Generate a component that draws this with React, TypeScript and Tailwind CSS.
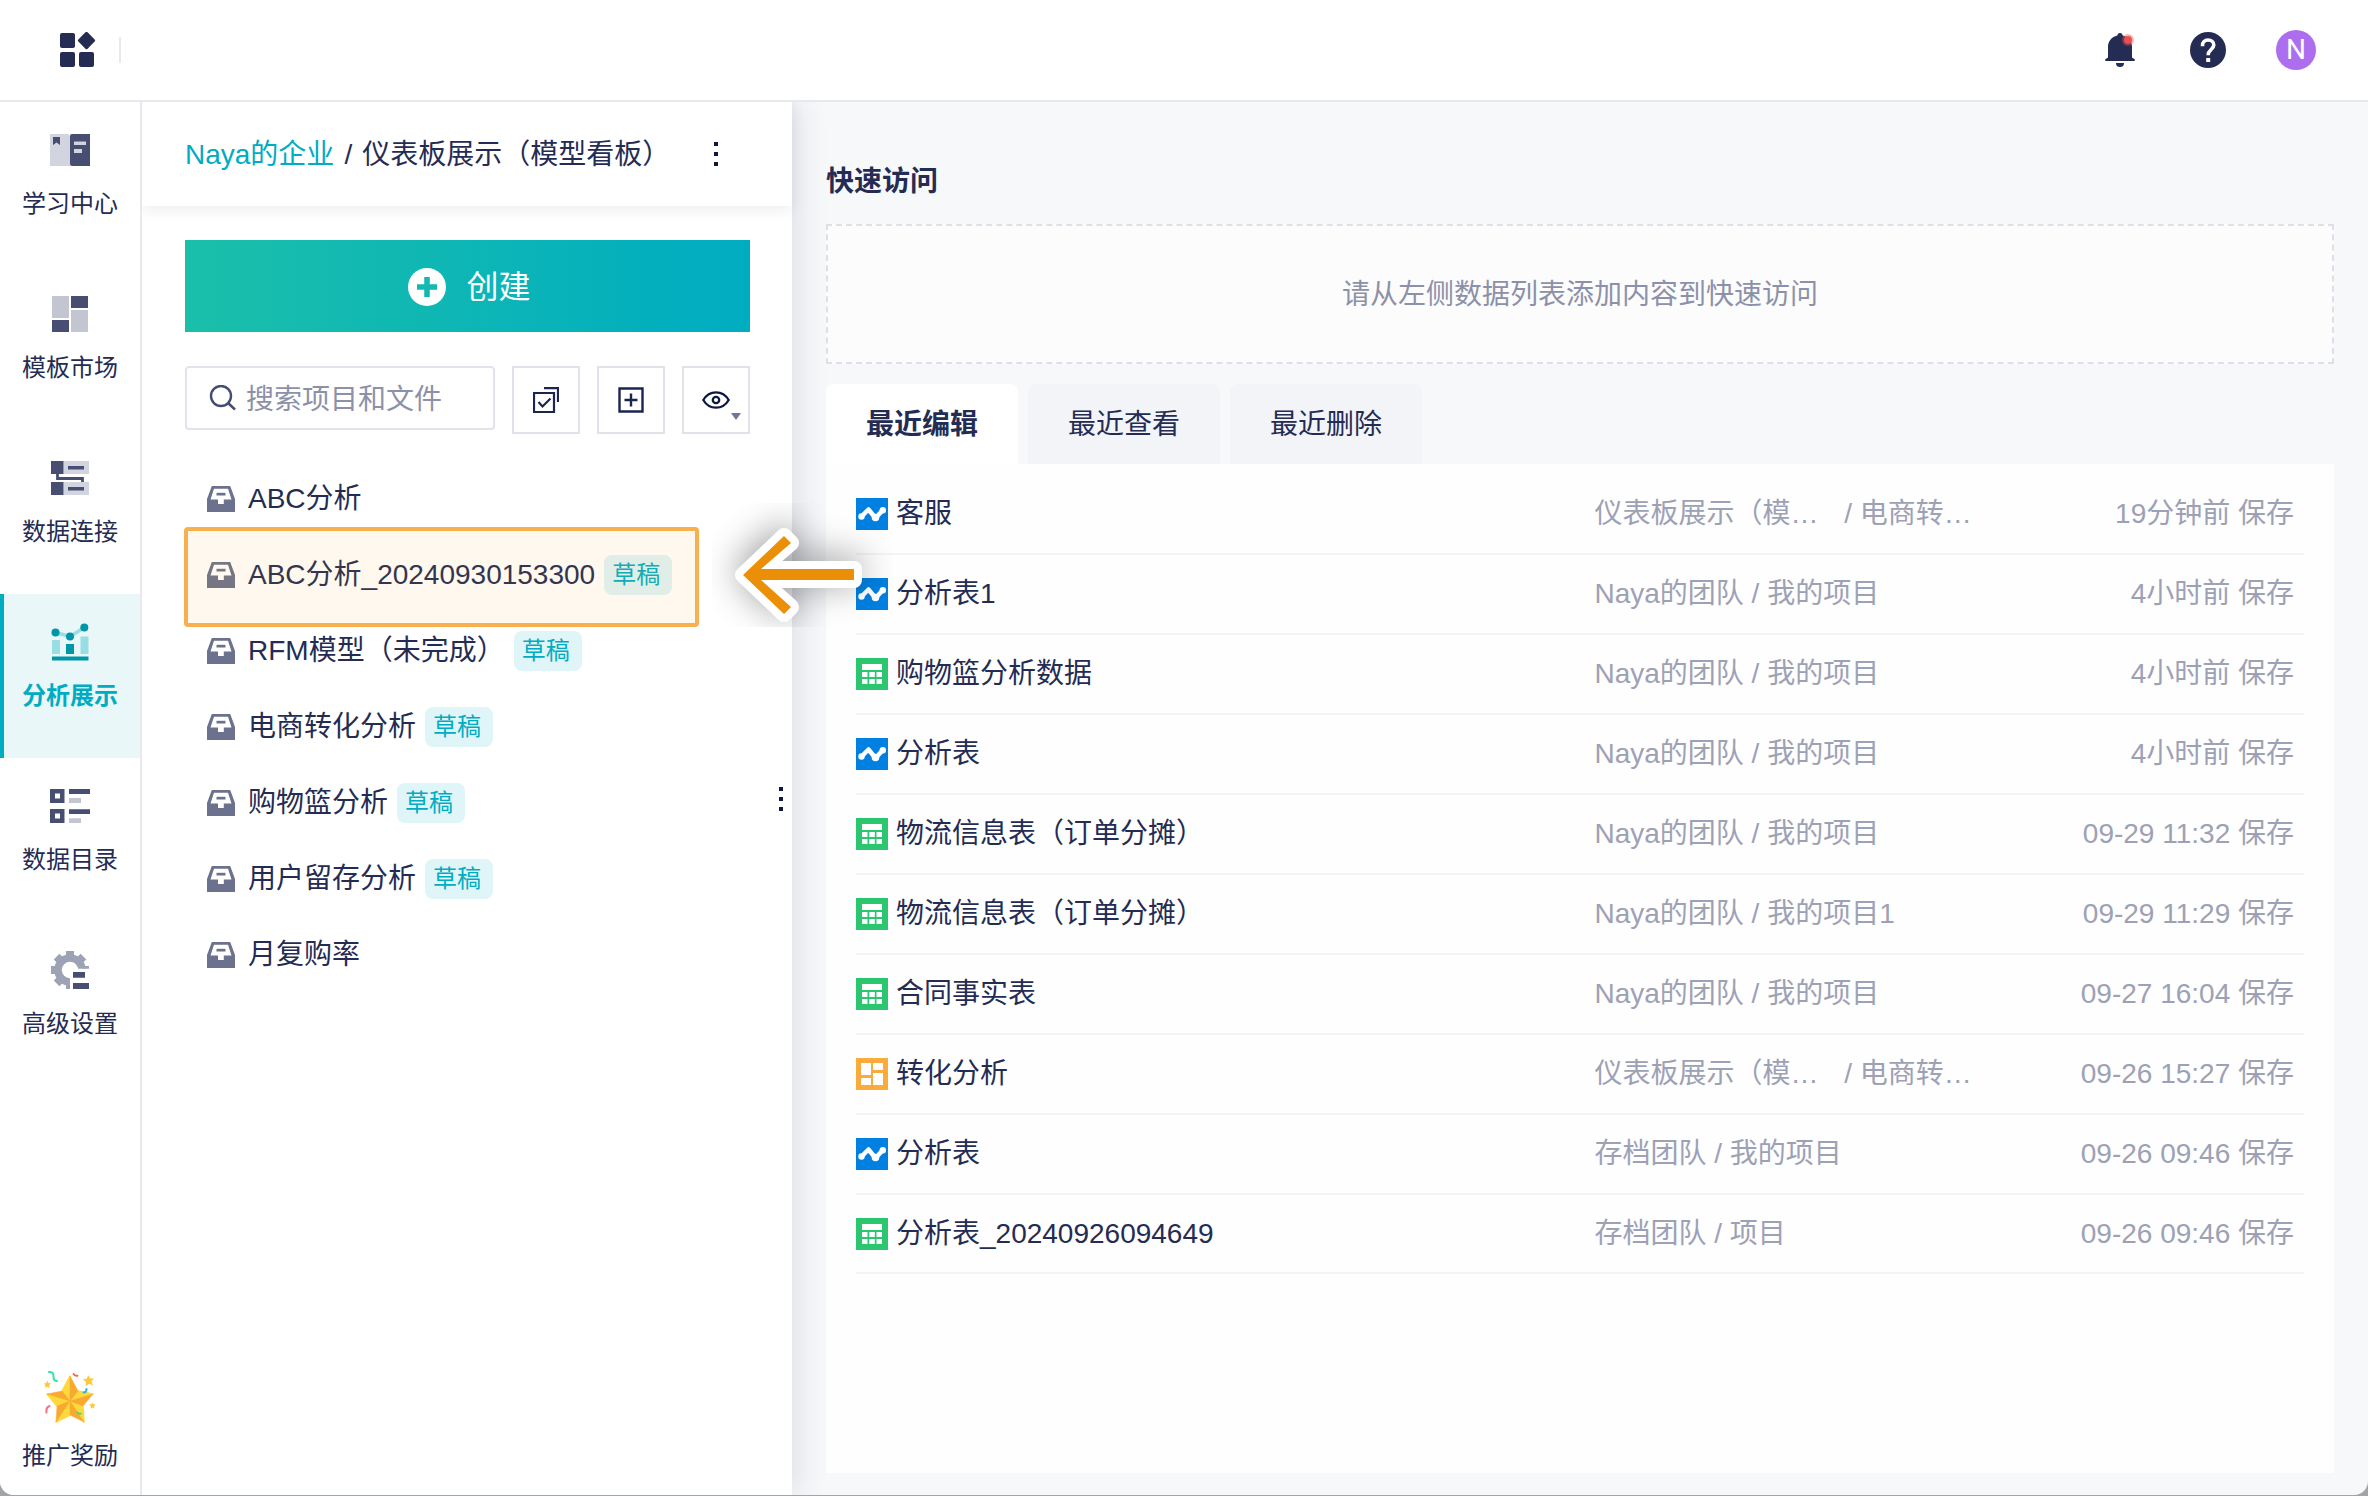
import type { ReactNode } from 'react';
import clsx from 'clsx';

type FileKind = 'chart' | 'sheet' | 'dashboard';

interface RecentFile {
  kind: FileKind;
  name: string;
  team: string;
  project: string;
  time: string;
  teamCut?: boolean;
}

const projects = [
  { name: 'ABC分析', draft: false },
  { name: 'ABC分析_20240930153300', draft: true, highlighted: true },
  { name: 'RFM模型（未完成）', draft: true },
  { name: '电商转化分析', draft: true },
  { name: '购物篮分析', draft: true },
  { name: '用户留存分析', draft: true },
  { name: '月复购率', draft: false },
];

const recentFiles: RecentFile[] = [
  { kind: 'chart', name: '客服', team: '仪表板展示（模…', project: '电商转…', time: '19分钟前 保存', teamCut: true },
  { kind: 'chart', name: '分析表1', team: 'Naya的团队', project: '我的项目', time: '4小时前 保存' },
  { kind: 'sheet', name: '购物篮分析数据', team: 'Naya的团队', project: '我的项目', time: '4小时前 保存' },
  { kind: 'chart', name: '分析表', team: 'Naya的团队', project: '我的项目', time: '4小时前 保存' },
  { kind: 'sheet', name: '物流信息表（订单分摊）', team: 'Naya的团队', project: '我的项目', time: '09-29 11:32 保存' },
  { kind: 'sheet', name: '物流信息表（订单分摊）', team: 'Naya的团队', project: '我的项目1', time: '09-29 11:29 保存' },
  { kind: 'sheet', name: '合同事实表', team: 'Naya的团队', project: '我的项目', time: '09-27 16:04 保存' },
  { kind: 'dashboard', name: '转化分析', team: '仪表板展示（模…', project: '电商转…', time: '09-26 15:27 保存', teamCut: true },
  { kind: 'chart', name: '分析表', team: '存档团队', project: '我的项目', time: '09-26 09:46 保存' },
  { kind: 'sheet', name: '分析表_20240926094649', team: '存档团队', project: '项目', time: '09-26 09:46 保存' },
];

const navItems = [
  { label: '学习中心', icon: <BookIcon /> },
  { label: '模板市场', icon: <TemplateIcon /> },
  { label: '数据连接', icon: <ConnectIcon /> },
  { label: '分析展示', icon: <AnalysisIcon />, active: true },
  { label: '数据目录', icon: <CatalogIcon /> },
  { label: '高级设置', icon: <SettingsIcon /> },
];

export default function App() {
  return (
    <div className="flex min-h-screen flex-col bg-[#a3a4a5] font-['Liberation_Sans','Noto_Sans_CJK_SC',sans-serif] text-[28px] leading-10 text-[#242c53]">
      <div className="mb-px flex flex-1 flex-col overflow-hidden rounded-b-[14px] bg-[#f7f8fa]">
        <TopBar />
        <div className="flex flex-1">
          <SideNav />
          <ProjectPanel />
          <Home />
        </div>
      </div>
    </div>
  );
}

function TopBar() {
  return (
    <header className="relative z-20 flex h-[102px] items-center justify-between border-b-2 border-[#e8e9ef] bg-white pl-[60px] pr-[52px]">
      <div className="flex items-center gap-[23px]">
        <button type="button" aria-label="应用">
          <svg className="h-9 w-9" viewBox="0 0 36 36" fill="#242c53">
            <rect x="0" y="1" width="15" height="15" rx="2" />
            <rect x="0" y="20" width="15" height="15" rx="2" />
            <rect x="19" y="20" width="15" height="15" rx="2" />
            <rect x="20" y="2" width="13" height="13" rx="1.5" transform="rotate(45 26.5 8.5)" />
          </svg>
        </button>
        <div className="h-[26px] w-0.5 bg-[#e8e9ef]" />
      </div>
      <div className="flex items-center gap-[50px]">
        <button type="button" aria-label="通知">
          <svg className="h-10 w-10" viewBox="0 0 40 40">
            <g fill="#242c53">
              <path d="M20 3c1.600 0 2.600 1 2.600 2.600C28.600 7 32 11.400 32 17v10.500l2.600 1.800c.7.600.4 1.700-.6 1.700H6c-1 0-1.300-1.100-.6-1.700L8 27.500V17C8 11.400 11.400 7 17.400 5.600 17.400 4 18.400 3 20 3z" />
              <path d="M16 33h8a4 4 0 0 1-8 0z" />
            </g>
            <circle cx="28" cy="10" r="6" fill="#ea4f50" fillOpacity="0.4" />
            <circle cx="28" cy="10" r="4" fill="#ea4f50" />
          </svg>
        </button>
        <button type="button" aria-label="帮助">
          <svg className="h-9 w-9" viewBox="0 0 36 36">
            <circle cx="18" cy="18" r="18" fill="#242c53" />
            <path d="M12.500 14.200V13.500C12.500 10.200 14.800 8 18 8s5.800 2.200 5.800 5.100c0 4.100-5.600 4.800-5.600 9.600v.6" fill="none" stroke="#fff" strokeWidth="3.600" />
            <rect x="16.200" y="26" width="4" height="4" fill="#fff" />
          </svg>
        </button>
        <button
          type="button"
          aria-label="账户"
          className="flex size-10 items-center justify-center rounded-full bg-[#ac6eee] font-['Roboto',sans-serif] text-white"
        >
          N
        </button>
      </div>
    </header>
  );
}

function SideNav() {
  return (
    <nav className="relative z-20 flex w-[142px] shrink-0 flex-col border-r-2 border-[#e8e9ef] bg-white text-2xl leading-8">
      {navItems.map((item) => (
        <a
          key={item.label}
          href="#"
          className={clsx(
            'flex h-[164px] flex-col items-center pt-7',
            item.active && 'bg-[#e9f7f8] font-bold text-[#00acc1] shadow-[inset_4px_0_0_#00acc1]',
          )}
        >
          <span className="size-10">{item.icon}</span>
          <span className="mt-[18px]">{item.label}</span>
        </a>
      ))}
      <a href="#" className="mt-auto flex flex-col items-center gap-4 pb-[23px]">
        <StarIcon />
        <span>推广奖励</span>
      </a>
    </nav>
  );
}

function ProjectPanel() {
  return (
    <aside className="relative z-10 flex w-[650px] shrink-0 flex-col bg-white shadow-[8px_0_28px_rgba(36,44,83,0.1)]">
      <div className="flex h-[104px] items-center justify-between pl-[43px] pr-[62px] shadow-[0_4px_14px_rgba(36,44,83,0.08)]">
        <div className="flex gap-2.5 pt-0.5">
          <a href="#" className="text-[#00acc1]">
            Naya的企业
          </a>
          <span>/</span>
          <span>仪表板展示（模型看板）</span>
        </div>
        <button type="button" aria-label="更多" className="flex w-7 flex-col items-center gap-1.5">
          <Dots />
        </button>
      </div>

      <div className="flex flex-col pl-[43px] pr-[42px] pt-[34px]">
        <button
          type="button"
          className="flex h-[92px] items-center justify-center gap-5 bg-linear-to-r from-[#1abfa9] to-[#00acc1] pl-1 pt-0.5 text-[32px] text-white"
        >
          <svg className="size-[38px]" viewBox="0 0 38 38">
            <circle cx="19" cy="19" r="19" fill="#fff" />
            <path d="M19 9v20M9 19h20" stroke="#12b8b2" strokeWidth="5.500" />
          </svg>
          创建
        </button>

        <div className="mt-[34px] flex items-start gap-[17px]">
          <label className="flex h-16 min-w-0 flex-1 items-center gap-2.5 rounded border-2 border-[#e1e4ec] pl-[22px]">
            <svg className="size-[27px] shrink-0" viewBox="0 0 27 27" fill="none" stroke="#454c72" strokeWidth="2.400">
              <circle cx="12" cy="11" r="10" />
              <path d="M19 18l7 6.500" />
            </svg>
            <input
              type="text"
              aria-label="搜索项目和文件"
              placeholder="搜索项目和文件"
              className="min-w-0 flex-1 bg-transparent pt-1 outline-none placeholder:text-[#8c91a9]"
            />
          </label>
          <ToolButton label="批量选择">
            <svg className="size-[26px]" viewBox="0 0 26 26" fill="none" stroke="#1c2450" strokeWidth="2.200">
              <path d="M1 6h20v19H1z" />
              <path d="M11 1.200h14V15" />
              <path d="M5.500 15l4 4.500 8-8" />
            </svg>
          </ToolButton>
          <ToolButton label="新建分组">
            <svg className="size-[26px]" viewBox="0 0 26 26" fill="none" stroke="#1c2450" strokeWidth="2.400">
              <path d="M1.500 1.500h23v23h-23z" />
              <path d="M13 6.500v13M6.500 13h13" />
            </svg>
          </ToolButton>
          <ToolButton label="显示">
            <svg className="size-[28px]" viewBox="0 0 28 28" fill="none" stroke="#0e1642" strokeWidth="2.300">
              <path d="M1.300 14C4.500 8.500 8.800 6.300 14 6.300S23.500 8.500 26.700 14C23.500 19.500 19.200 21.700 14 21.700S4.500 19.500 1.300 14z" />
              <circle cx="14" cy="14" r="3.200" />
            </svg>
            <span className="absolute bottom-3 right-[7px] border-x-[5px] border-t-[7px] border-x-transparent border-t-[#70769a]" />
          </ToolButton>
        </div>

        <ul className="mt-[27px]">
          {projects.map((project) => (
            <li key={project.name} className="relative flex h-[76px] items-center pl-[22px]">
              <InboxIcon />
              <a href="#" className="ml-[13px] whitespace-nowrap">
                {project.name}
              </a>
              {project.draft && (
                <span className="ml-[9px] h-10 rounded-lg bg-[#e0f5f8] pl-2 pr-3 text-2xl leading-10 text-[#00acc1]">
                  草稿
                </span>
              )}
              {project.highlighted && <Callout />}
            </li>
          ))}
        </ul>
      </div>

      <div className="absolute right-[9px] top-1/2 flex -translate-y-1/2 flex-col gap-1.5">
        <Dots />
      </div>
    </aside>
  );
}

function Dots() {
  return (
    <>
      <span className="size-1 bg-[#0e1642]" />
      <span className="size-1 bg-[#0e1642]" />
      <span className="size-1 bg-[#0e1642]" />
    </>
  );
}

function ToolButton({ label, children }: { label: string; children: ReactNode }) {
  return (
    <button
      type="button"
      aria-label={label}
      className="relative flex size-[68px] shrink-0 items-center justify-center border-2 border-[#e1e2e9]"
    >
      {children}
    </button>
  );
}

// Orange frame and arrow laid over the row they point at
function Callout() {
  const arrow = '743,575 784,536 791,543 761,569 854,569 854,580 761,580 791,607 784,614';
  return (
    <>
      <div className="pointer-events-none absolute -left-px -top-2.5 h-[100px] w-[515px] rounded border-4 border-[#f8b04f] bg-[#f5a523]/8" />
      <div className="pointer-events-none absolute -top-[34px] left-[527px] h-[124px] w-[180px] overflow-hidden">
        <svg
          className="h-[124px] w-[180px] drop-shadow-[0_-4px_18px_rgba(0,0,0,0.4)]"
          viewBox="712 503 180 124"
        >
          <polygon points={arrow} fill="#fff" stroke="#fff" strokeWidth="16" strokeLinejoin="round" />
          <polygon points={arrow} fill="#ea8f07" />
        </svg>
      </div>
    </>
  );
}

function Home() {
  return (
    <main className="flex min-w-0 flex-1 flex-col px-[34px] pb-[22px] pt-[60px]">
      <h2 className="font-bold">快速访问</h2>
      <div className="mt-[22px] flex h-[140px] items-center justify-center border-2 border-dashed border-[#dfe0e7] bg-[#fcfcfd] pt-0.5 text-[#8c91a9]">
        请从左侧数据列表添加内容到快速访问
      </div>

      <div role="tablist" className="mt-5 flex gap-2.5">
        <Tab active>最近编辑</Tab>
        <Tab>最近查看</Tab>
        <Tab>最近删除</Tab>
      </div>

      <section className="flex-1 bg-[#fefefe] px-[30px] pt-2.5">
        <table className="w-full table-fixed">
          <tbody>
            {recentFiles.map((file, i) => (
              <tr key={i} className="h-20 border-b-2 border-[#f3f4f8] last:h-[79px]">
                <td className="w-[51%]">
                  <a href="#" className="flex items-center gap-2">
                    <FileIcon kind={file.kind} />
                    {file.name}
                  </a>
                </td>
                <td className="whitespace-nowrap text-[#9da1b5]">
                  <span className={clsx(file.teamCut && 'pr-[18px]')}>{file.team}</span> / {file.project}
                </td>
                <td className="w-[24%] pr-2.5 text-right text-[#9da1b5]">{file.time}</td>
              </tr>
            ))}
          </tbody>
        </table>
      </section>
    </main>
  );
}

function Tab({ active = false, children }: { active?: boolean; children: ReactNode }) {
  return (
    <button
      type="button"
      role="tab"
      aria-selected={active}
      className={clsx('h-20 rounded-t-lg px-10 pt-0.5', active ? 'bg-white font-bold' : 'bg-[#f3f4f8]')}
    >
      {children}
    </button>
  );
}

function FileIcon({ kind }: { kind: FileKind }) {
  if (kind === 'chart') {
    return (
      <svg className="size-8 shrink-0" viewBox="0 0 32 32">
        <path d="M0 0h32v32H0z" fill="#0080e1" />
        <path d="M5.500 18.500l7-7 7 8.500 7-7.500" fill="none" stroke="#fff" strokeWidth="4.500" strokeLinecap="round" strokeLinejoin="round" />
        <g fill="#fff">
          <circle cx="5.500" cy="18.500" r="3.200" />
          <circle cx="19.500" cy="19.500" r="3.800" />
          <circle cx="26.800" cy="12.300" r="3.200" />
        </g>
      </svg>
    );
  }
  if (kind === 'sheet') {
    return (
      <svg className="size-8 shrink-0" viewBox="0 0 32 32">
        <path d="M0 0h32v32H0z" fill="#2ac670" />
        <path
          d="M6 6h20v6H6zM6 14h5.500v5H6zM13.300 14h5.500v5h-5.500zM20.500 14H26v5h-5.500zM6 21h5.500v5H6zM13.300 21h5.500v5h-5.500zM20.500 21H26v5h-5.500z"
          fill="#fff"
        />
      </svg>
    );
  }
  return (
    <svg className="size-8 shrink-0" viewBox="0 0 32 32">
      <path d="M0 0h32v32H0z" fill="#fbab3c" />
      <path d="M5 5h10v12H5zM17 5h10v7H17zM5 20h10v7H5zM17 15h10v12H17z" fill="#fff" />
    </svg>
  );
}

function InboxIcon() {
  return (
    <svg className="h-[26px] w-7 shrink-0" viewBox="0 0 28 26" fill="#6c718d">
      <path fillRule="evenodd" d="M4.800 0h18.400L28 13v13H0V13zM7 2.800L3.500 13.500H11V18h5.800v-4.500h7.700L21 2.800z" />
      <path d="M9.500 6.800h9v2.700h-9z" />
    </svg>
  );
}

function BookIcon() {
  return (
    <svg viewBox="0 0 40 40">
      <path d="M0 4h17q3 0 3 3v29H0z" fill="#d2d4df" />
      <path d="M40 4H22q-2 0-2 2v28q0 2 2 2h18z" fill="#474e71" />
      <path d="M3 7h7v8l-3.500-2.500L3 15z" fill="#474e71" />
      <path d="M24 11.500h12v3.500H24zM24 19h8v4h-8z" fill="#d2d4df" />
    </svg>
  );
}

function TemplateIcon() {
  return (
    <svg viewBox="0 0 40 40">
      <path d="M2 2h17v22H2zM21 16h17v22H21z" fill="#c3c5d1" />
      <path d="M21 2h17v12H21zM2 26h17v12H2z" fill="#474e71" />
    </svg>
  );
}

function ConnectIcon() {
  return (
    <svg viewBox="0 0 40 40">
      <path d="M13.500 3H39v13H13.500zM13.500 24H39v13H13.500z" fill="#d2d4df" />
      <path d="M1 3h12.500v13H1zM1 24h12.500v13H1zM18 8h16v3.500H18zM18 29h16v3.500H18z" fill="#474e71" />
      <path d="M7.500 15v5.500h25V24" fill="none" stroke="#474e71" strokeWidth="2.800" />
    </svg>
  );
}

function AnalysisIcon() {
  return (
    <svg viewBox="0 0 40 40">
      <path d="M5.500 10.500l14.500 4 14.300-9" fill="none" stroke="#98dee4" strokeWidth="3.500" />
      <path d="M2 18h8v14H2zM30.500 14.500h8V32h-8z" fill="#98dee4" />
      <g fill="#0096a8">
        <path d="M16 22h8v10h-8zM2 34.500h36.500v4H2z" />
        <circle cx="5.500" cy="10.500" r="4" />
        <circle cx="20" cy="14.500" r="4" />
        <circle cx="34.300" cy="5.500" r="4" />
      </g>
    </svg>
  );
}

function CatalogIcon() {
  return (
    <svg viewBox="0 0 40 40">
      <path
        fillRule="evenodd"
        d="M0 3h14.500v14H0zM5 7.500v5h5v-5zM0 23h14.500v14H0zM5 27.500v5h5v-5zM19 3h21v5H19zM19 23.300h21v4.700H19z"
        fill="#474e71"
      />
      <path d="M19 12h12v5H19zM19 32.300h12V37H19z" fill="#c3c5d1" />
    </svg>
  );
}

function SettingsIcon() {
  return (
    <svg viewBox="0 0 40 40">
      <clipPath id="gear-cut">
        <path d="M0 0h40v18.700H20V40H0z" />
      </clipPath>
      <g clipPath="url(#gear-cut)">
        <circle cx="20" cy="20" r="12" fill="none" stroke="#9ea2b5" strokeWidth="7.500" />
        <path
          d="M20 1v6M20 33v6M1 20h6M33 20h6M6.600 6.600l4 4M29.400 29.400l4 4M6.600 33.400l4-4M29.400 10.600l4-4"
          stroke="#9ea2b5"
          strokeWidth="8"
        />
      </g>
      <path d="M23 22h12v5.800H23zM23 33h16v6H23z" fill="#474e71" />
    </svg>
  );
}

function StarIcon() {
  return (
    <svg className="h-[54px] w-[52px]" viewBox="0 0 52 54">
      <g strokeLinejoin="round" strokeWidth="1.500">
        <path
          d="M26 31V6l-8 15zM26 31l8-10 15 3zM26 31l13 5 1 16zM26 31v14l-14 7zM26 31l-13 5L3 24z"
          fill="#ffd93b"
          stroke="#ffd93b"
        />
        <path
          d="M26 31V6l8 15zM26 31l23-7-10 12zM26 31l14 21-14-7zM26 31L12 52l1-16zM26 31L3 24l15-3z"
          fill="#f8aa30"
          stroke="#f8aa30"
          strokeWidth="0.500"
        />
      </g>
      <g fill="#fdc934">
        <path d="M44 5l2 3.500 4-.3-2.500 3.200 1.500 4-3.800-1.600-3.500 2.400.3-4.200L39 9.300l4-.8z" />
        <path d="M3.500 10.500l1 2.500 2.500.3-1.800 2 .5 2.700-2.300-1.300L1 18l.4-2.600L0 13.500l2.400-.5z" />
        <path d="M48.500 32.500l.9 1.800 2.200.3-1.500 1.600.3 2.200-2-1-2 1 .4-2.200-1.500-1.600 2.200-.3z" />
      </g>
      <g fill="none" strokeWidth="2" strokeLinecap="round">
        <path d="M5 2c4-.5 4.500 2 4.500 4.500S10 11 13 11" stroke="#2ee6a6" />
        <path d="M29.500 4c1 1.500 2.300 2 4 1.800" stroke="#fb6a42" />
        <path d="M42.500 19c0 2.500-1 3.500-3 3.500" stroke="#25b8f2" />
        <path d="M5.500 36c-2.500 1-3.500 3.500-3 6.500" stroke="#f7707c" />
        <path d="M33.500 42.500c.8 1 2 1.300 3.300 1.200" stroke="#3ddc84" />
      </g>
    </svg>
  );
}
